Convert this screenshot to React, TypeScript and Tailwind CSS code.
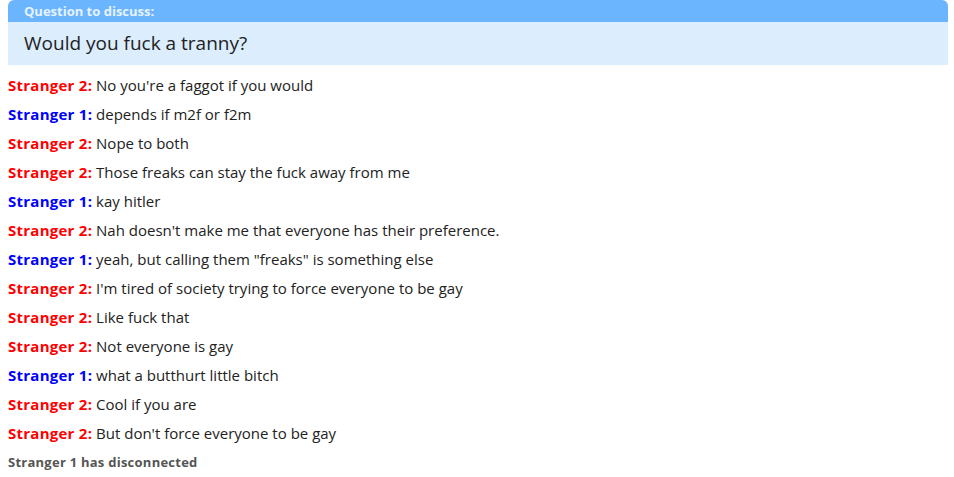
import React from "react";

const msgs: [number, string][] = [
  [2, "No you're a faggot if you would"],
  [1, "depends if m2f or f2m"],
  [2, "Nope to both"],
  [2, "Those freaks can stay the fuck away from me"],
  [1, "kay hitler"],
  [2, "Nah doesn't make me that everyone has their preference."],
  [1, 'yeah, but calling them "freaks" is something else'],
  [2, "I'm tired of society trying to force everyone to be gay"],
  [2, "Like fuck that"],
  [2, "Not everyone is gay"],
  [1, "what a butthurt little bitch"],
  [2, "Cool if you are"],
  [2, "But don't force everyone to be gay"],
];

export default function App() {
  return (
    <div
      className="w-[954px] h-[477px] bg-white pl-[8px] pr-[6px] overflow-hidden"
      style={{ fontFamily: '"Open Sans", "Noto Sans", sans-serif' }}
    >
      <div className="rounded-t-[6px] overflow-hidden">
        <div className="bg-[#6bb5ff] h-[22px] pl-[16px] text-[13px] font-bold text-[#e6f2ff] leading-[22px]">
          Question to discuss:
        </div>
        <div className="bg-[#dcedfd] h-[43px] pl-[16px] text-[19px] text-[#222] leading-[43px]">
          Would you fuck a tranny?
        </div>
      </div>
      <div className="mt-[6px]">
        {msgs.map(([s, t], i) => (
          <div key={i} className="text-[15px] leading-[29px] text-[#222] whitespace-nowrap">
            <span
              className={
                s === 2
                  ? "font-bold text-[#ff0000] tracking-[0.25px]"
                  : "font-bold text-[#0000ff] tracking-[0.25px]"
              }
            >
              Stranger {s}:
            </span>{" "}
            {t}
          </div>
        ))}
        <div className="text-[13px] leading-[29px] font-bold text-[#555] tracking-[0.25px]">Stranger 1 has disconnected</div>
      </div>
    </div>
  );
}
